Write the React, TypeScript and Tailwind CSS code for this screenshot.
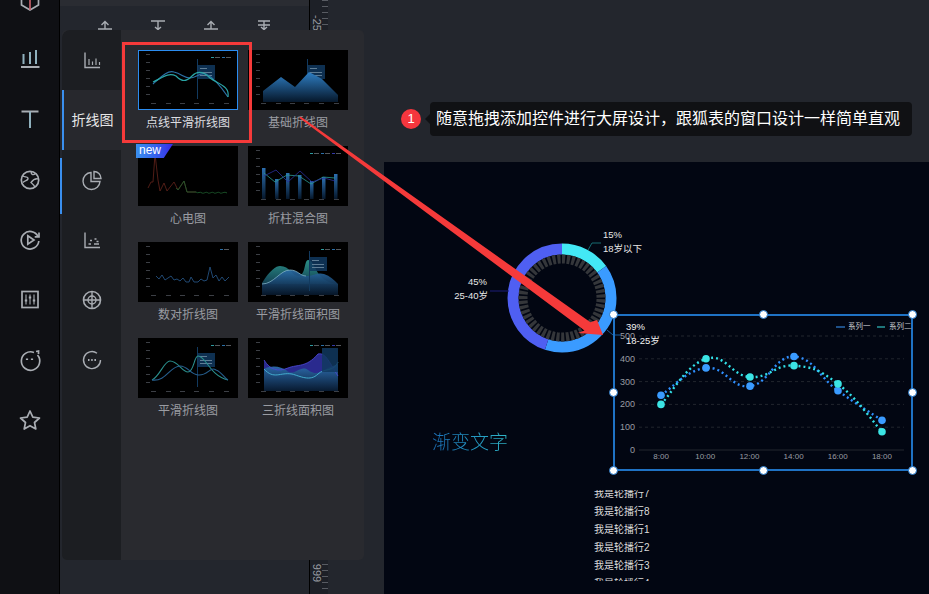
import React from "react";

const cjk = { fontFamily: '"Liberation Sans", "Noto Sans CJK SC", sans-serif' };

const Rail = ({ children }: { children: React.ReactNode }) => (
  <div className="h-[60px] flex items-center justify-center shrink-0">
    <svg width="32" height="32" viewBox="0 0 32 32" fill="none" stroke="#a9adb3" strokeWidth="1.7" strokeLinecap="butt">
      {children}
    </svg>
  </div>
);

const Tab = ({ children }: { children: React.ReactNode }) => (
  <div className="h-[60px] flex items-center justify-center pl-[1px]">
    <svg width="24" height="24" viewBox="0 0 24 24" fill="none" stroke="#a9adb3" strokeWidth="1.4">
      {children}
    </svg>
  </div>
);

const TinyAxis = () => (
  <g fill="#3c3f45">
    {[10, 18, 26, 34, 42, 50].map((y) => (
      <rect key={y} x="8" y={y - 6} width="4" height="1" />
    ))}
    {[15, 30, 44, 58, 73, 88].map((x) => (
      <rect key={x} x={x - 2} y="53" width="5" height="1" />
    ))}
  </g>
);

const TipBox = ({ x = 60 }: { x?: number }) => (
  <g>
    <rect x={x} y="15" width="17" height="14" fill="#10385f" opacity="0.85" />
    <rect x={x + 2} y="18" width="7" height="1" fill="#5f7d95" />
    <rect x={x + 2} y="22" width="12" height="1" fill="#5f7d95" />
    <rect x={x + 2} y="25" width="12" height="1" fill="#5f7d95" />
    <rect x={x - 1} y="9" width="1" height="40" fill="#123a5f" />
  </g>
);

const Legend = ({ colors, x = 73 }: { colors: string[]; x?: number }) => (
  <g>
    {colors.map((c, i) => (
      <g key={i}>
        <rect x={x + i * 11} y="7" width="3" height="1" fill={c} />
        <rect x={x + 4 + i * 11} y="7" width="5" height="1" fill="#55585c" />
      </g>
    ))}
  </g>
);

const thumbs: { label: string; active?: boolean; isNew?: boolean; art: React.ReactNode }[] = [
  {
    label: "点线平滑折线图",
    active: true,
    art: (
      <>
        <TinyAxis />
        <Legend colors={["#2d9a9f", "#2a6fa8"]} />
        <TipBox />
        <path d="M15 34C24 26 30 20 36 22C44 24 46 28 52 28C58 28 62 22 68 24C76 28 84 38 90 47" stroke="#2c6fa5" strokeWidth="1.2" fill="none" />
        <path d="M15 32C24 28 30 22 38 26C44 32 48 32 54 26C60 20 66 22 72 28C80 34 92 36 90 47" stroke="#2aa6a6" strokeWidth="1.2" fill="none" />
      </>
    ),
  },
  {
    label: "基础折线图",
    art: (
      <>
        <defs>
          <linearGradient id="a1" x1="0" y1="0" x2="0" y2="1">
            <stop offset="0" stopColor="#2f7fc4" />
            <stop offset="1" stopColor="#06172a" />
          </linearGradient>
        </defs>
        <TinyAxis />
        <TipBox />
        <path d="M15 41L33 27L47 37L61 22L74 29L90 45V52H15Z" fill="url(#a1)" />
      </>
    ),
  },
  {
    label: "心电图",
    isNew: true,
    art: (
      <>
        <path d="M10 42L13 36L15 36L17 8L20 34L22 45L26 37L29 45L36 36L40 44L46 35L49 46H58" stroke="#5a2018" strokeWidth="0.9" fill="none" />
        <path d="M38 42L40 44L46 35L49 46H58C60 48 62 45 64 47C66 48 68 45 70 47C72 48 74 45 76 47C78 48 80 45 82 47C84 48 86 45 89 47" stroke="#1d5a2c" strokeWidth="0.9" fill="none" />
      </>
    ),
  },
  {
    label: "折柱混合图",
    art: (
      <>
        <defs>
          <linearGradient id="b1" x1="0" y1="0" x2="0" y2="1">
            <stop offset="0" stopColor="#2c6fb0" />
            <stop offset="1" stopColor="#06172a" />
          </linearGradient>
        </defs>
        <TinyAxis />
        <Legend colors={["#2d9a9f", "#2a6fa8", "#3338a8"]} x={62} />
        {[[14, 22], [27, 33], [38, 27], [50, 29], [62, 35], [74, 31], [86, 28]].map(([x, y]) => (
          <rect key={x} x={x} y={y} width="3.5" height={53 - y} fill="url(#b1)" />
        ))}
        <path d="M16 27L27 36L39 29L51 30L63 38L75 31L87 32" stroke="#2a9a93" strokeWidth="0.8" fill="none" />
        <path d="M16 30L28 24L40 36L52 25L64 36L76 32L87 35" stroke="#2b2f9a" strokeWidth="0.8" fill="none" />
      </>
    ),
  },
  {
    label: "数对折线图",
    art: (
      <>
        <TinyAxis />
        <Legend colors={["#2a6fa8"]} x={82} />
        <path d="M18 34L21 37L24 33L27 38L30 36L33 34L36 38L39 37L42 39L45 36L48 40L51 40L53 35L56 40L60 40L63 37L66 39L69 38L72 25L75 36L78 33L81 39L84 35L87 39L91 35" stroke="#24507f" strokeWidth="0.9" fill="none" />
      </>
    ),
  },
  {
    label: "平滑折线面积图",
    art: (
      <>
        <defs>
          <linearGradient id="c1" x1="0" y1="0" x2="0" y2="1">
            <stop offset="0" stopColor="#2b8f86" />
            <stop offset="1" stopColor="#123f52" />
          </linearGradient>
          <linearGradient id="c2" x1="0" y1="0" x2="0" y2="1">
            <stop offset="0" stopColor="#2a6da8" />
            <stop offset="1" stopColor="#07172a" />
          </linearGradient>
        </defs>
        <TinyAxis />
        <Legend colors={["#2d9a9f", "#2a6fa8"]} />
        <path d="M14 41C22 28 28 24 32 24C42 24 44 34 50 34C58 34 56 18 60 18C68 18 66 40 90 42V42L14 42Z" fill="url(#c1)" />
        <path d="M14 42C26 42 32 28 42 28C50 28 52 34 58 34C66 34 70 30 76 32C82 34 86 38 90 42V53H14Z" fill="url(#c2)" opacity="0.92" />
        <path d="M14 42C26 42 32 28 42 28C50 28 52 34 58 34" stroke="#7fb0c4" strokeWidth="0.8" fill="none" />
        <TipBox x={62} />
      </>
    ),
  },
  {
    label: "平滑折线图",
    art: (
      <>
        <TinyAxis />
        <Legend colors={["#2d9a9f", "#2a6fa8"]} />
        <TipBox x={60} />
        <path d="M14 42C22 38 26 23 32 23C40 23 44 34 50 34C56 34 56 18 60 18C68 18 72 38 90 42" stroke="#2a8f8c" strokeWidth="1.1" fill="none" />
        <path d="M14 42C28 44 32 28 42 28C50 28 52 36 60 37C70 38 72 28 78 32C84 34 86 40 90 42" stroke="#265f8f" strokeWidth="1.1" fill="none" />
      </>
    ),
  },
  {
    label: "三折线面积图",
    art: (
      <>
        <defs>
          <linearGradient id="d1" x1="0" y1="0" x2="0" y2="1">
            <stop offset="0" stopColor="#2e6fb3" />
            <stop offset="1" stopColor="#081a30" />
          </linearGradient>
        </defs>
        <TinyAxis />
        <Legend colors={["#2d9a9f", "#2a6fa8", "#3338a8"]} x={62} />
        <path d="M16 22C22 32 30 34 40 30C50 26 58 30 70 16C78 14 82 26 90 38V42H16Z" fill="#2a2a8e" />
        <path d="M16 31C26 26 34 30 38 32C46 40 52 26 60 32C68 38 74 34 80 30L90 26V53H16Z" fill="url(#d1)" />
        <path d="M16 31C26 42 32 34 44 36C52 38 62 44 70 36C76 30 86 34 90 24" stroke="#46b6d6" strokeWidth="0.9" fill="none" />
        <path d="M16 22C22 32 30 34 40 30C50 26 58 30 70 16C78 14 82 26 90 38" stroke="#4a46d0" strokeWidth="0.9" fill="none" />
        <rect x="74" y="10" width="16" height="24" fill="#10385f" opacity="0.85" />
      </>
    ),
  },
];

// coordinates inside the selected chart, measured from its outer corner
const xs = [661, 706, 750, 794, 838, 882].map((x) => x - 614);
const toY = (v: number) => 135 - v * 0.228;
const blue = [240, 360, 280, 410, 260, 130];
const cyan = [200, 400, 320, 370, 290, 80];

const smooth = (vals: number[]) => {
  const pts = vals.map((v, i) => [xs[i], toY(v)]);
  let d = `M${pts[0][0]} ${pts[0][1]}`;
  for (let i = 0; i < pts.length - 1; i++) {
    const p0 = pts[Math.max(i - 1, 0)];
    const p1 = pts[i];
    const p2 = pts[i + 1];
    const p3 = pts[Math.min(i + 2, pts.length - 1)];
    d += `C${p1[0] + (p2[0] - p0[0]) * 0.22} ${p1[1] + (p2[1] - p0[1]) * 0.22} ${p2[0] - (p3[0] - p1[0]) * 0.22} ${p2[1] - (p3[1] - p1[1]) * 0.22} ${p2[0]} ${p2[1]}`;
  }
  return d;
};

const handles = [
  "-left-[6px] -top-[6px]",
  "left-[144px] -top-[6px]",
  "-right-[6px] -top-[6px]",
  "-left-[6px] top-[72px]",
  "-right-[6px] top-[72px]",
  "-left-[6px] -bottom-[6px]",
  "left-[144px] -bottom-[6px]",
  "-right-[6px] -bottom-[6px]",
];

const Donut = () => {
  const r = 49;
  const c = 2 * Math.PI * r;
  const seg = [
    { color: "#43e8f5", start: 0, len: 0.15 },
    { color: "#3a9bff", start: 0.15, len: 0.4 },
    { color: "#4f5ff2", start: 0.55, len: 0.45 },
  ];
  return (
    <svg width="130" height="130" viewBox="-65 -65 130 130" className="block">
      <g transform="rotate(-90)">
        {seg.map((s) => (
          <circle key={s.color} r={r} fill="none" stroke={s.color} strokeWidth="11" strokeDasharray={`${s.len * c} ${c}`} strokeDashoffset={-s.start * c} />
        ))}
        <circle r="39" fill="none" stroke="#34363a" strokeWidth="9" strokeDasharray="3.2 1.6" />
      </g>
    </svg>
  );
};

export default function App() {
  return (
    <div className="relative w-[929px] h-[594px] overflow-hidden flex bg-[#23262d]" style={cjk}>
      {/* left rail */}
      <div className="w-[60px] shrink-0 h-full bg-[#0f1014] border-r border-black overflow-hidden">
        <div className="flex flex-col -mt-[30px]">
          <Rail>
            <path d="M16 6L24.5 10.5V21L16 26L7.5 21V10.5Z" />
            <path d="M16 15V26" stroke="#c4606a" />
            <path d="M7.5 10.5L16 15L24.5 10.5" />
          </Rail>
          <Rail>
            <path d="M7 23H25.5" strokeWidth="2" />
            <path d="M9.5 20V10M16 20V8M22 20V6" stroke="#8fb0bd" strokeWidth="2" />
          </Rail>
          <Rail>
            <path d="M7.5 7.5H24.5" strokeWidth="2" />
            <path d="M16 7.5V24" stroke="#8fb0bd" strokeWidth="2" />
          </Rail>
          <Rail>
            <circle cx="16" cy="16" r="8.7" />
            <path d="M8.5 12C11 13.5 13 12 14 14C14.5 17 11 16 9 18.5M17.5 7.5C16.5 10.5 19 11.5 21.5 9.5M24.5 15C21 14 18.5 16.5 17 18.5C19 20 20 20.5 21 23.5" strokeWidth="1.3" />
          </Rail>
          <Rail>
            <path d="M24 12.5A8.8 8.8 0 1 0 24.8 17" />
            <path d="M25 8.5V12.8H20.7" />
            <path d="M13.8 11.8L20 16L13.8 20.2Z" />
          </Rail>
          <Rail>
            <rect x="8" y="7.5" width="16" height="16" />
            <path d="M12 10.5V20.5M16 10.5V20.5M20 10.5V20.5" strokeWidth="1.1" />
            <path d="M10.8 16.5H13.2M14.8 13.5H17.2M18.8 16.5H21.2" strokeWidth="2" />
          </Rail>
          <Rail>
            <path d="M20 8.5A9.2 9.2 0 1 0 23.5 11" />
            <path d="M22 7.5L24.5 7V10" />
            <path d="M13 14.5V16M18 14.5V16" strokeWidth="2.2" />
          </Rail>
          <Rail>
            <path d="M16 7L18.8 13.2L25.5 14L20.5 18.5L21.8 25L16 21.7L10.2 25L11.5 18.5L6.5 14L13.2 13.2Z" strokeLinejoin="round" />
          </Rail>
        </div>
      </div>

      {/* toolbar column */}
      <div className="w-[250px] shrink-0 h-full flex flex-col border-r border-black">
        <div className="h-[6px] bg-[#2a2c32]" />
        <div className="flex pl-[33px] gap-[29px] pt-[13px]">
          {[
            "M5 10H19M12 10V3M8.5 6L12 2.5L15.5 6",
            "M5 2H19M12 2V10M9 8L12 10.5L15 8",
            "M5 10H19M12 10V3M8.5 6L12 2.5L15.5 6",
            "M6 2H18M6 6H18M12 2V10M9 8L12 10.5L15 8",
          ].map((d, i) => (
            <svg key={i} width="24" height="24" viewBox="0 0 24 24" fill="none" stroke="#a9adb3" strokeWidth="1.4">
              <path d={d} />
            </svg>
          ))}
        </div>
      </div>

      {/* ruler */}
      <div className="relative w-[18px] shrink-0 h-full bg-[#1d2027] overflow-hidden">
        <div className="absolute left-[12px] top-0 w-[6px] h-full bg-[repeating-linear-gradient(to_bottom,#585b62_0,#585b62_1px,transparent_1px,transparent_6px)]" />
        <span className="absolute left-[-6px] top-[20px] text-[11px] leading-[12px] text-[#9a9da3] rotate-90 origin-center w-[26px] text-center">-250</span>
        <span className="absolute left-[-3px] top-[567px] text-[11px] leading-[12px] text-[#9a9da3] rotate-90 origin-center w-[20px] text-center">999</span>
      </div>

      {/* workspace */}
      <div className="flex-1 flex flex-col min-w-0">
        <div className="h-[162px] shrink-0" />
        <div className="flex-1 ml-[56px] relative bg-[#020612] overflow-hidden">
          <div className="absolute left-[113px] top-[71px]">
            <Donut />
          </div>

          {/* donut labels */}
          <div className="absolute left-[219px] top-[66px] text-[9.5px] leading-[14px] text-[#e8e8e8]">
            <div>15%</div>
            <div>18岁以下</div>
          </div>
          <div className="absolute left-[64px] top-[113px] w-[40px] text-right text-[9.5px] leading-[14px] text-[#e8e8e8]">
            <div className="pr-[1px]">45%</div>
            <div>25-40岁</div>
          </div>
          <svg className="absolute left-0 top-0 pointer-events-none" width="545" height="432" fill="none">
            <path d="M204 88L208 81H217" stroke="#176a70" strokeWidth="1" />
            <path d="M106 129H125" stroke="#1c1c78" strokeWidth="1" />
            <path d="M223 168L229 173H236" stroke="#1a5a99" strokeWidth="1" />
          </svg>

          {/* selected chart */}
          <div className="absolute left-[229px] top-[152px] w-[300px] h-[157px] border-2 border-[#1f72c4]">
            <svg width="296" height="153" viewBox="1 1 296 153" fill="none" className="absolute left-0 top-0">
              {[100, 200, 300, 400, 500].map((v) => (
                <path key={v} d={`M25 ${toY(v)}H290`} stroke="#22262e" strokeWidth="1" strokeDasharray="3 3" />
              ))}
              <path d={`M25 ${toY(0)}H290`} stroke="#22262e" strokeWidth="1" />
              <path d={smooth(blue)} stroke="#2f8fff" strokeWidth="2.4" strokeDasharray="2 3" />
              <path d={smooth(cyan)} stroke="#32e0e8" strokeWidth="2.4" strokeDasharray="2 3" />
              {blue.map((v, i) => <circle key={i} cx={xs[i]} cy={toY(v)} r="3.8" fill="#3a9bff" />)}
              {cyan.map((v, i) => <circle key={i} cx={xs[i]} cy={toY(v)} r="3.8" fill="#3be4e4" />)}
              <path d="M222 12H231" stroke="#3a9bff" strokeWidth="1" />
              <path d="M263 12H271" stroke="#3be4e4" strokeWidth="1" />
            </svg>
            {handles.map((pos) => (
              <div key={pos} className={`absolute w-[9px] h-[9px] rounded-full bg-white border border-[#1f72c4] ${pos}`} />
            ))}
            <span className="absolute left-[233px] top-[5px] text-[7.5px] leading-[12px] text-[#c8cace] whitespace-nowrap">系列一</span>
            <span className="absolute left-[274px] top-[5px] text-[7.5px] leading-[12px] text-[#c8cace] whitespace-nowrap">系列二</span>
            <div className="absolute left-0 w-[20px] top-[15px] h-[124px] flex flex-col justify-between text-right text-[9px] leading-[10px] text-[#9a9da3]">
              {[500, 400, 300, 200, 100, 0].map((v) => <span key={v}>{v}</span>)}
            </div>
            <div className="absolute left-[24px] w-[265px] top-[136px] grid grid-cols-6 text-center text-[8px] leading-[10px] text-[#9a9da3]">
              {["8:00", "10:00", "12:00", "14:00", "16:00", "18:00"].map((v) => <span key={v}>{v}</span>)}
            </div>
            <div className="absolute left-[11px] top-[4px] text-[9.5px] leading-[14px] text-[#f2f2f2]">
              <div>39%</div>
              <div>18-25岁</div>
            </div>
          </div>

          {/* gradient text */}
          <div className="absolute left-[48px] top-[268px] text-[19px] leading-[26px] font-light text-transparent bg-clip-text bg-gradient-to-r from-[#1c6fb8] to-[#2fb6c8]">
            渐变文字
          </div>

          {/* carousel */}
          <div className="absolute left-[210px] top-[328px] h-[91px] w-[120px] overflow-hidden text-[10px] leading-[18px] text-[#dcdcdc]">
            <div className="-mt-[5px]">
              {["我是轮播行7", "我是轮播行8", "我是轮播行1", "我是轮播行2", "我是轮播行3", "我是轮播行4"].map((t) => (
                <div key={t}>{t}</div>
              ))}
            </div>
          </div>
        </div>
      </div>

      {/* floating chart picker */}
      <div className="absolute left-[62px] top-[30px] w-[302px] h-[530px] flex rounded-[5px] overflow-hidden bg-[#292a2f]">
        <div className="w-[59px] shrink-0 bg-[#1c1e22] rounded-tl-[8px]">
          <Tab>
            <path d="M5 4.5V19.5H20" />
            <path d="M9 17V11M12.5 17V13.5M16 17V10.5M19.5 17V14" strokeWidth="1.2" />
          </Tab>
          <div className="h-[60px] bg-[#27282d] border-l-2 border-[#3a8fee] flex items-center justify-center text-[14px] text-[#e6e6e6] whitespace-nowrap">
            折线图
          </div>
          <Tab>
            <path d="M11 4.5A8.5 8.5 0 1 0 20 13.5H11Z" />
            <path d="M14 3.5A7 7 0 0 1 21 10.5H14Z" />
          </Tab>
          <Tab>
            <path d="M5 4.5V19.5H20" />
            <path d="M8.5 16H11M14 16H19M10 12.5H12M14.5 11H16.5M16.5 13.5H18.5" strokeWidth="1.6" />
          </Tab>
          <Tab>
            <circle cx="12" cy="12" r="8.5" strokeWidth="1.6" />
            <circle cx="12" cy="12" r="4" />
            <path d="M12 3V21M3 12H21" />
          </Tab>
          <Tab>
            <path d="M17 5.2A8.5 8.5 0 1 0 20.5 12" />
            <path d="M8 12H9.5M11.2 12H12.7M14.4 12H16" strokeWidth="2" />
          </Tab>
        </div>
        <div className="flex-1 pl-[17px] pt-[20px] grid grid-cols-[100px_100px] gap-x-[10px] auto-rows-[96px]">
          {thumbs.map((t) => (
            <div key={t.label} className="relative flex flex-col items-center">
              <svg width="100" height="60" viewBox="0 0 100 60" className={`block bg-black shrink-0 ${t.active ? "outline outline-1 -outline-offset-1 outline-[#2b8cf0]" : ""}`}>
                {t.art}
              </svg>
              {t.isNew && (
                <div className="absolute -left-[2px] -top-[2px] h-[14px] w-[37px] pl-[3px] text-[12px] leading-[13px] text-white bg-gradient-to-r from-[#3a8fee] to-[#3a22e8] [clip-path:polygon(0_0,100%_0,75%_100%,0_100%)]">
                  new
                </div>
              )}
              <div className={`mt-[5px] text-[12px] leading-[17px] whitespace-nowrap ${t.active ? "text-[#dcdde0]" : "text-[#9a9ca2]"}`}>
                {t.label}
              </div>
            </div>
          ))}
        </div>
      </div>

      {/* blue marker beside the picker */}
      <div className="absolute left-[60px] top-[158px] w-[2px] h-[56px] bg-[#3a8fee]" />

      {/* annotation: highlight box */}
      <div className="absolute left-[122px] top-[42px] w-[130px] h-[101px] border-[3px] border-[#f53a3a]" />

      {/* annotation: step hint */}
      <div className="absolute left-[401px] top-[102px] flex items-center h-[34px]">
        <div className="w-[20px] h-[20px] rounded-full bg-[#f5363e] text-white text-[13px] flex items-center justify-center">1</div>
        <div className="ml-[4px] w-0 h-0 border-y-[5px] border-y-transparent border-r-[5px] border-r-[#101114]" />
        <div className="h-[34px] w-[482px] rounded-[4px] bg-[#101114] text-white text-[16px] flex items-center pl-[6px] whitespace-nowrap">
          随意拖拽添加控件进行大屏设计，跟狐表的窗口设计一样简单直观
        </div>
      </div>

      {/* annotation: arrow */}
      <svg className="absolute left-0 top-0 pointer-events-none" width="929" height="594" fill="none">
        <path d="M300.6 116.4L590.4 322.3L597 320L603 335L578 333L584.6 330.6L299.4 118Z" fill="#f53a3a" />
      </svg>
    </div>
  );
}
